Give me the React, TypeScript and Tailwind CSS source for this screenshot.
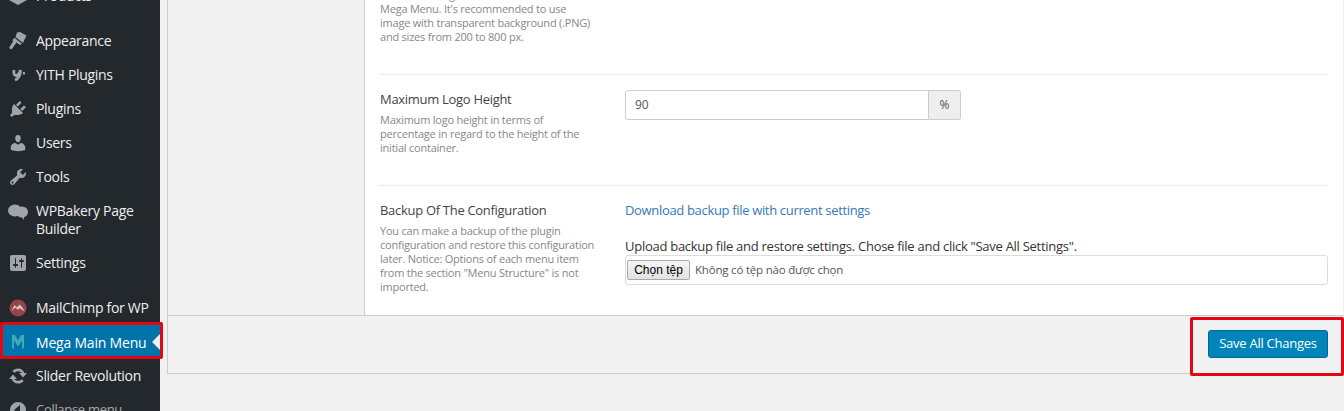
import type { ReactNode } from "react";

const font = "font-['Open_Sans','Noto_Sans',sans-serif]";

function Dash({ d }: { d: string }) {
  return (
    <svg viewBox="0 0 20 20" className="h-5 w-5 fill-[#a0a5aa]">
      <path d={d} />
    </svg>
  );
}

const icons: Record<string, ReactNode> = {
  products: (
    <svg viewBox="0 0 20 20" className="h-5 w-5 fill-[#a0a5aa]">
      <path d="M10 1 19 5v9l-9 5-9-5V5z" />
    </svg>
  ),
  appearance: (
    <svg viewBox="0 0 20 20" className="h-5 w-5 fill-[#a0a5aa]">
      <path d="M9 1.500 12 1l6.500 3.500L16 9.500l-1 2.500-7.500-6z" />
      <path d="M6.500 6.800l7.500 6-2 1.200-3.500-2.500L3.500 18.500 1 17l4-6.500-.5-1.500z" />
    </svg>
  ),
  yith: (
    <svg viewBox="0 0 20 20" className="h-5 w-5 fill-none stroke-[#a0a5aa] stroke-[2.8]">
      <path d="M6 5c-.5 3 0 5.500 2 5.500s3.500-2.500 4.500-5.500M12.500 5c0 4.500-1.500 8.500-5.500 10M15 8.500l2-.5" />
    </svg>
  ),
  plugins: (
    <Dash d="M13.11 4.36 9.87 7.6 8 5.73l3.24-3.24c.35-.34 1.05-.2 1.56.32.52.51.66 1.21.31 1.55zm-8 1.77.91-1.12 9.01 9.01-1.19.84c-.71.71-2.63 1.16-3.82 1.16H6.14L4.9 17.26c-.59.59-1.54.59-2.12 0-.59-.58-.59-1.53 0-2.12l1.24-1.24v-3.88c0-1.13.4-3.19 1.09-3.89zm7.26 3.97 3.24-3.24c.34-.35 1.04-.21 1.55.31.52.51.66 1.21.31 1.55l-3.24 3.25z" />
  ),
  users: (
    <Dash d="M10 9.25c-2.27 0-2.73-3.44-2.73-3.44C7 4.02 7.82 2 9.97 2c2.16 0 2.98 2.02 2.71 3.81 0 0-.41 3.44-2.68 3.44zm0 2.57L12.72 10c2.39 0 4.52 2.33 4.52 4.53v2.49s-3.65 1.13-7.24 1.13c-3.65 0-7.24-1.13-7.24-1.13v-2.49c0-2.25 1.94-4.48 4.47-4.48z" />
  ),
  tools: (
    <Dash d="M16.68 9.77c-1.34 1.34-3.3 1.67-4.95.99l-5.41 6.52c-.99.99-2.59.99-3.58 0s-.99-2.59 0-3.57l6.52-5.42c-.68-1.65-.35-3.61.99-4.95 1.28-1.28 3.12-1.62 4.72-1.06l-2.89 2.89 2.82 2.82 2.86-2.87c.53 1.58.18 3.39-1.08 4.65zM3.81 16.21c.4.39 1.04.39 1.43 0 .4-.4.4-1.04 0-1.43-.39-.4-1.03-.4-1.43 0-.39.39-.39 1.03 0 1.43z" />
  ),
  bakery: (
    <svg viewBox="0 0 20 20" className="h-5 w-5 fill-[#a0a5aa]">
      <ellipse cx="7" cy="8.500" rx="7" ry="6" />
      <ellipse cx="14" cy="10" rx="6" ry="5.500" />
      <path d="M13 14l3 4 0-4z" />
    </svg>
  ),
  settings: (
    <Dash d="M18 16V4c0-1.100-.9-2-2-2H4c-1.100 0-2 .9-2 2v12c0 1.100.9 2 2 2h12c1.100 0 2-.9 2-2zM8 11h1c.55 0 1 .45 1 1s-.45 1-1 1H8v1.500c0 .28-.22.5-.5.5s-.5-.22-.5-.5V13H6c-.55 0-1-.45-1-1s.45-1 1-1h1V5.500c0-.28.22-.5.5-.5s.5.22.5.5V11zm5-2h-1c-.55 0-1-.45-1-1s.45-1 1-1h1V5.500c0-.28.22-.5.5-.5s.5.22.5.5V7h1c.55 0 1 .45 1 1s-.45 1-1 1h-1v5.500c0 .28-.22.5-.5.5s-.5-.22-.5-.5V9z" />
  ),
  mailchimp: (
    <svg viewBox="0 0 20 20" className="h-5 w-5">
      <circle cx="10" cy="10" r="8.500" fill="#98424a" />
      <path d="M3.500 13 6.500 7l2.500 2.500L11.500 6.500l2.500 2.500 3 4.500-3.500-2-2-1.500-1.500 2-2.500-2.500z" fill="#dcc8c5" />
    </svg>
  ),
  mega: (
    <svg viewBox="0 0 20 20" className="h-5 w-5">
      <path d="M4 3h3l3 5.500L13 3h3v12.500L14 17.500V8.500l-4 6-4-6v9l-2-2z" fill="#4fb3b8" opacity="0.85" />
    </svg>
  ),
  slider: (
    <svg viewBox="0 0 20 20" className="h-5 w-5 fill-[#a0a5aa]">
      <path d="M10 2.500c3 0 5.500 1.900 6.300 4.500H19l-4 4.500L11 7h2.700C13 5.900 11.600 5.200 10 5.200c-1.400 0-2.700.6-3.500 1.600L4.300 5.100C5.700 3.500 7.700 2.500 10 2.500z" />
      <path d="M10 17.500c-3 0-5.500-1.900-6.300-4.500H1l4-4.500L9 13H6.300c.7 1.100 2.100 1.800 3.700 1.800 1.400 0 2.700-.6 3.500-1.600l2.200 1.700C14.300 16.500 12.300 17.500 10 17.500z" />
    </svg>
  ),
  collapse: (
    <svg viewBox="0 0 20 20" className="h-5 w-5 fill-[#a0a5aa]">
      <path d="M10 2a8 8 0 1 1 0 16 8 8 0 0 1 0-16zm2 3L6 10l6 5z" fillRule="evenodd" />
    </svg>
  ),
};

type Item = { icon: string; label: ReactNode; tall?: boolean; gap?: boolean };

const items: Item[] = [
  { icon: "products", label: "Products" },
  { icon: "appearance", label: "Appearance", gap: true },
  { icon: "yith", label: "YITH Plugins" },
  { icon: "plugins", label: "Plugins" },
  { icon: "users", label: "Users" },
  { icon: "tools", label: "Tools" },
  { icon: "bakery", label: "WPBakery Page Builder", tall: true },
  { icon: "settings", label: "Settings" },
  { icon: "mailchimp", label: "MailChimp for WP", gap: true },
];

function MenuRow({ item }: { item: Item }) {
  return (
    <div
      className={`flex text-[14px] leading-[18px] tracking-[-0.3px] text-[#eeeeee] ${item.gap ? "mt-[11px]" : ""} ${
        item.tall ? "h-[52px] items-start pt-2" : "h-[34px] items-center"
      }`}
    >
      <span className="flex w-[36px] shrink-0 justify-center pr-[1px]">{icons[item.icon]}</span>
      <span className="w-[118px]">{item.label}</span>
    </div>
  );
}

function Sidebar() {
  return (
    <aside className="h-[411px] w-[160px] shrink-0 overflow-hidden bg-[#23282d]">
      <div className="-mt-[21px]">
        {items.map((item) => (
          <MenuRow key={item.icon} item={item} />
        ))}
        <div className="relative flex h-[34px] items-center bg-[#0073aa] text-[14px] tracking-[-0.2px] text-white">
          <span className="flex w-[36px] shrink-0 justify-center pr-[1px]">{icons.mega}</span>
          <span>Mega Main Menu</span>
          <span className="absolute right-0 top-[9px] h-0 w-0 border-y-[8px] border-r-[8px] border-y-transparent border-r-[#f1f1f1]" />
        </div>
        <MenuRow item={{ icon: "slider", label: "Slider Revolution" }} />
        <div className="flex h-[34px] items-center text-[13px] tracking-[-0.3px] text-[#aaaaaa]">
          <span className="flex w-[36px] shrink-0 justify-center pr-[1px]">{icons.collapse}</span>
          <span>Collapse menu</span>
        </div>
      </div>
    </aside>
  );
}

function Label({ title, lines }: { title?: string; lines: string[] }) {
  return (
    <div className="w-[245px] shrink-0">
      {title && <div className="text-[13px] leading-[18px] tracking-[-0.3px] text-[#444444]">{title}</div>}
      <div className={`text-[11px] leading-[14px] tracking-[-0.22px] text-[#888888] ${title ? "mt-[5px]" : ""}`}>
        {lines.map((line) => (
          <div key={line} className="whitespace-nowrap">
            {line}
          </div>
        ))}
      </div>
    </div>
  );
}

function Settings() {
  return (
    <div className="flex h-[315px]">
      <div className="w-[197px] shrink-0 border-r border-[#cccccc] bg-[#f1f1f1]" />
      <div className="flex-1 bg-white px-[15px]">
        <div className="flex h-[75px] flex-col justify-end border-b border-dotted border-[#dddddd] pb-[30px]">
          <Label
            lines={[
              "Select the image which will be shown in the",
              "Mega Menu. It's recommended to use",
              "image with transparent background (.PNG)",
              "and sizes from 200 to 800 px.",
            ]}
          />
        </div>
        <div className="flex h-[111px] border-b border-dotted border-[#dddddd] pt-[15px]">
          <Label
            title="Maximum Logo Height"
            lines={[
              "Maximum logo height in terms of",
              "percentage in regard to the height of the",
              "initial container.",
            ]}
          />
          <div className="flex h-[30px] w-[336px] text-[12px] text-[#555555]">
            <div className="flex flex-1 items-center rounded-l-[3px] border border-[#cccccc] bg-white px-[9px]">90</div>
            <div className="flex w-[32px] items-center justify-center rounded-r-[3px] border border-l-0 border-[#cccccc] bg-[#eeeeee]">
              %
            </div>
          </div>
        </div>
        <div className="flex pt-[15px]">
          <Label
            title="Backup Of The Configuration"
            lines={[
              "You can make a backup of the plugin",
              "configuration and restore this configuration",
              "later. Notice: Options of each menu item",
              'from the section "Menu Structure" is not',
              "imported.",
            ]}
          />
          <div className="flex-1">
            <a className="block text-[13px] leading-[18px] tracking-[-0.33px] text-[#337ab7]">
              Download backup file with current settings
            </a>
            <div className="mt-[18px] text-[13px] leading-[18px] tracking-[-0.27px] text-[#333333]">
              Upload backup file and restore settings. Chose file and click "Save All Settings".
            </div>
            <div className="flex h-[30px] items-center gap-[5px] rounded-[3px] border border-[#dddddd] bg-white pl-[1px]">
              <button className="h-[20px] w-[63px] rounded-[2px] border border-[#a9a9a9] bg-gradient-to-b from-[#f5f5f5] to-[#e2e2e2] font-['Liberation_Sans',sans-serif] text-[12px] leading-[16px] text-black">
                Chọn tệp
              </button>
              <span className="text-[11.500px] tracking-[-0.2px] text-[#555555]">Không có tệp nào được chọn</span>
            </div>
          </div>
        </div>
      </div>
    </div>
  );
}

export default function App() {
  return (
    <div className={`relative flex h-[411px] w-[1344px] overflow-hidden bg-[#f1f1f1] ${font}`}>
      <Sidebar />
      <main className="flex-1 pl-[7px] pr-[1px]">
        <div className="border-l border-[#cccccc]">
          <Settings />
          <div className="flex h-[59px] items-center justify-end border-y border-[#cccccc] bg-[#f1f1f1] pb-[1px] pr-[15px]">
            <button className="h-[28px] w-[120px] rounded-[3px] border border-[#006799] bg-[#0085ba] text-[13px] tracking-[-0.25px] text-white">
              Save All Changes
            </button>
          </div>
        </div>
      </main>
      <div className="absolute left-0 top-[322px] h-[37px] w-[163px] rounded-[2px] border-[3px] border-[#e30613]" />
      <div className="absolute left-[1190px] top-[317px] h-[59px] w-[154px] rounded-[2px] border-[3px] border-[#e30613]" />
    </div>
  );
}
